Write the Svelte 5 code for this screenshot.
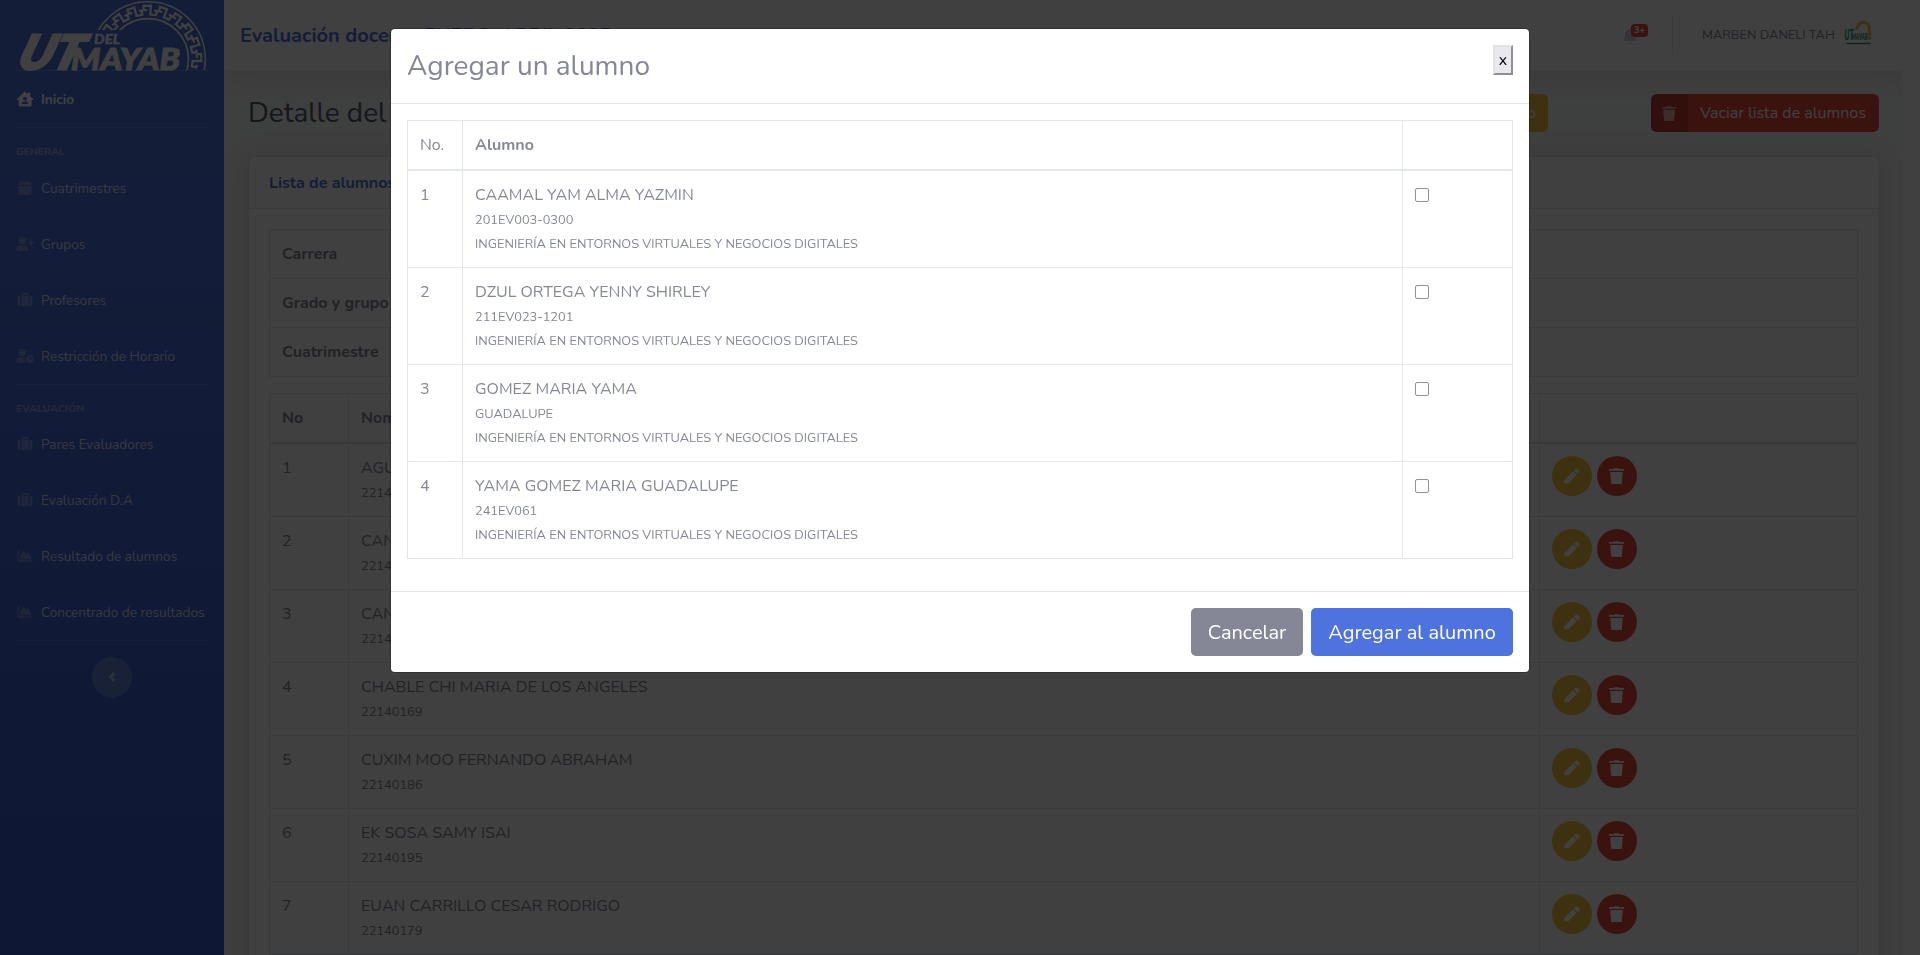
<script>
  const general = [
    { icon: 'calendar', label: 'Cuatrimestres' },
    { icon: 'userPlus', label: 'Grupos' },
    { icon: 'suitcase', label: 'Profesores' },
    { icon: 'userClock', label: 'Restricción de Horario' }
  ];
  const evaluation = [
    { icon: 'suitcase', label: 'Pares Evaluadores' },
    { icon: 'suitcase', label: 'Evaluación D.A' },
    { icon: 'chart', label: 'Resultado de alumnos' },
    { icon: 'chart', label: 'Concentrado de resultados' }
  ];
  const groupInfo = ['Carrera', 'Grado y grupo', 'Cuatrimestre'];
  const roster = [
    ['AGU', '22140'],
    ['CAN', '22140'],
    ['CAN', '22140'],
    ['CHABLE CHI MARIA DE LOS ANGELES', '22140169'],
    ['CUXIM MOO FERNANDO ABRAHAM', '22140186'],
    ['EK SOSA SAMY ISAI', '22140195'],
    ['EUAN CARRILLO CESAR RODRIGO', '22140179']
  ];
  const program = 'INGENIERÍA EN ENTORNOS VIRTUALES Y NEGOCIOS DIGITALES';
  const candidates = [
    ['CAAMAL YAM ALMA YAZMIN', '201EV003-0300'],
    ['DZUL ORTEGA YENNY SHIRLEY', '211EV023-1201'],
    ['GOMEZ MARIA YAMA', 'GUADALUPE'],
    ['YAMA GOMEZ MARIA GUADALUPE', '241EV061']
  ];

  // Fret band of the emblem, one S-shaped hook per step around the arc
  const hook = [[0.3, 0.5], [0.08, 0.5], [0.08, 1], [0.52, 1], [0.52, 0], [0.94, 0], [0.94, 0.5], [0.76, 0.5]];
  const steps = 9;
  let fret = '';
  for (let i = 0; i < steps; i++) {
    hook.forEach(([u, v], k) => {
      const a = ((150 - ((i + u) * 161) / steps) * Math.PI) / 180;
      const r = 44.6 + v * 8.8;
      fret += `${k ? 'L' : 'M'}${(132 + r * Math.cos(a)).toFixed(1)} ${(59 - r * Math.sin(a)).toFixed(1)}`;
    });
  }
</script>

{#snippet icon(name)}
  {#if name === 'home'}
    <svg class="ico" viewBox="0 0 18 16"><path fill-rule="evenodd" d="M9 .6 11.7 3V2.1q0-.6.6-.6h1.4q.6 0 .6.6v3.2l2.9 2.6q.6.9-.6 1.1h-1v5.3q0 1.1-1.1 1.1H3.700q-1.100 0-1.100-1.100V9h-1q-1.200-.2-.6-1.100L8.300.9Q8.700.5 9 .6ZM9 5.800a1.900 1.900 0 1 0 0 3.800 1.900 1.900 0 0 0 0-3.800ZM7.600 10.400Q5.900 10.600 5.700 12.600q0 .5.5.5h5.600q.5 0 .5-.5-.2-2-1.900-2.200Z"/></svg>
  {:else if name === 'calendar'}
    <svg class="ico" viewBox="0 0 18 16"><path d="M4 2h1.400V.9q0-.6.8-.6t.8.6V2h4V.9q0-.6.8-.6t.8.6V2H14q1.500 0 1.500 1.500V5h-13V3.500Q2.500 2 4 2ZM2.500 6h13v7.500Q15.500 15 14 15H4q-1.500 0-1.500-1.500Z"/></svg>
  {:else if name === 'userPlus'}
    <svg class="ico" viewBox="0 0 18 16"><circle cx="6.300" cy="4.500" r="3.700"/><path d="M4.800 9.400h3Q12 9.600 12.300 14q0 1-1 1h-10q-1 0-1-1 .3-4.400 4.500-4.600ZM14.200 4h1.500v2h2.100v1.500h-2.100v2.100h-1.500V7.500H12V6h2.200Z"/></svg>
  {:else if name === 'userClock'}
    <svg class="ico" viewBox="0 0 18 16"><circle cx="6.300" cy="4.500" r="3.700"/><path fill-rule="evenodd" d="M4.800 9.400h3l1.400.2q-1 3 .8 5.400H1.300q-1 0-1-1 .3-4.400 4.500-4.600ZM13.900 6.900a4 4 0 1 0 0 8 4 4 0 0 0 0-8Zm-.5 1.800h.9v1.900h1.600v.9h-2.500Z"/></svg>
  {:else if name === 'suitcase'}
    <svg class="ico" viewBox="0 0 18 16"><path fill-rule="evenodd" d="M5.300 14.200V2.500Q5.300 1 6.800 1h4.400q1.500 0 1.500 1.500v11.700ZM6.800 3.800h4.400V2.500H6.800ZM3 4h1.300v10.200H3Q1.500 14.200 1.500 12.700V5.500Q1.500 4 3 4ZM13.700 4H15q1.500 0 1.500 1.500v7.200q0 1.500-1.500 1.500h-1.300Z"/></svg>
  {:else if name === 'chart'}
    <svg class="ico" viewBox="0 0 18 16"><path d="M1.500 2.500H3v9.700h13.500v1.500H2.500q-1 0-1-1ZM4 11.200V7.500l3-4.100q.4-.4.800 0l2 2.300 2-1.300q.5-.2.800.2l3.400 6.600Z"/></svg>
  {:else if name === 'trash'}
    <svg class="ico" viewBox="0 0 16 16"><path d="M5.200.2h4.600l.5.900h4.700v1.600H0V1.100h4.700ZM1.200 4h12.600l-.9 11q-.1 1-1.100 1H3.200q-1 0-1.100-1Z"/></svg>
  {:else if name === 'pencil'}
    <svg class="ico" viewBox="0 0 16 16"><path d="M11.400.9q1.200-1 2.400 0l1.400 1.400q1 1.200 0 2.400L13.600 6.300 9.800 2.500ZM9 3.300l3.800 3.800-7.300 7.200q-.5.400-1 .9H.2L0 15 .4 12Z"/></svg>
  {/if}
{/snippet}

<div class="page">
  <nav class="sidebar">
    <div class="brand">
      <svg width="192" height="70" viewBox="0 0 192 70">
        <defs><clipPath id="ring"><path d="M0 0H192V70H169V60L130 30H0Z"/></clipPath></defs>
        <g clip-path="url(#ring)" fill="none" stroke="#fff">
          <circle cx="132" cy="59" r="57.300" stroke-width="1.500"/>
          <circle cx="132" cy="59" r="40.400" stroke-width="1.600"/>
          <path d={fret} stroke-width="2.200"/>
        </g>
        <g fill="#fff" stroke="#fff" class="mark">
          <text transform="translate(0 69) skewX(-18)" font-size="47" stroke-width="3" textLength="62" lengthAdjust="spacingAndGlyphs">UT</text>
          <text x="78" y="43.500" font-size="13.500" stroke-width=".3" textLength="26" lengthAdjust="spacingAndGlyphs">DEL</text>
          <text x="55" y="69.500" font-size="30" stroke-width="1" textLength="109" lengthAdjust="spacingAndGlyphs">MAYAB</text>
        </g>
      </svg>
    </div>
    <hr class="flush" />
    <a class="item active" href="#inicio">{@render icon('home')}<span>Inicio</span></a>
    <hr />
    <div class="heading">General</div>
    {#each general as g}
      <a class="item" href="#general">{@render icon(g.icon)}<span>{g.label}</span></a>
    {/each}
    <hr />
    <div class="heading">Evaluación</div>
    {#each evaluation as g}
      <a class="item" href="#evaluacion">{@render icon(g.icon)}<span>{g.label}</span></a>
    {/each}
    <hr />
    <button class="toggle" aria-label="Contraer"><svg width="8" height="10" viewBox="0 0 8 10"><path d="M6.300 1 2.300 5l4 4" fill="none" stroke="currentColor" stroke-width="2.800"/></svg></button>
  </nav>

  <div class="content">
    <header class="topbar">
      <div class="period"><span>Evaluación docente</span><span class="term">ENERO-ABRIL 2025</span></div>
      <div class="bell">
        <svg width="14" height="16" viewBox="0 0 14 16"><path d="M7 0q1 0 1 1v.7q3.800.8 4 5 0 3 1.700 4.600.6 1.400-.8 1.700H1.100q-1.400-.3-.8-1.700Q2 9.700 2 6.700q.2-4.200 4-5V1q0-1 1-1ZM5 14h4q-.3 2-2 2t-2-2Z" fill="#d1d3e2"/></svg>
        <span class="badge">3+</span>
      </div>
      <div class="rule"></div>
      <span class="user">MARBEN DANELI TAH</span>
      <svg class="avatar" width="32" height="32" viewBox="0 0 32 32">
        <path d="M15 10.500a5.700 6.500 0 0 1 12.500 0V21" fill="none" stroke="#f5c469" stroke-width="3.500"/>
        <g fill="#12a07c" class="mark">
          <text x="2.500" y="21" font-size="15" textLength="9" lengthAdjust="spacingAndGlyphs">UT</text>
          <text x="9.500" y="21" font-size="10" textLength="16" lengthAdjust="spacingAndGlyphs">MAYAB</text>
          <rect x="4.500" y="23.800" width="24" height="1.400"/>
        </g>
      </svg>
    </header>

    <main>
      <div class="title-row">
        <h1>Detalle del grupo</h1>
        <button class="btn warn">Agregar alumno</button>
        <button class="btn danger"><span class="btn-icon">{@render icon('trash')}</span><span class="btn-text">Vaciar lista de alumnos</span></button>
      </div>
      <section class="card">
        <h6>Lista de alumnos</h6>
        <div class="card-body">
          <table class="info">
            <tbody>
              {#each groupInfo as label}<tr><th>{label}</th></tr>{/each}
            </tbody>
          </table>
          <table class="roster">
            <colgroup><col class="num" /><col /><col class="act" /></colgroup>
            <thead><tr><th>No</th><th>Nombre</th><th></th></tr></thead>
            <tbody>
              {#each roster as [name, id], i}
                <tr>
                  <td>{i + 1}</td>
                  <td><div>{name}</div><div class="small">{id}</div></td>
                  <td>
                    <div class="actions">
                      <button class="circle yellow" aria-label="Editar">{@render icon('pencil')}</button>
                      <button class="circle red" aria-label="Eliminar">{@render icon('trash')}</button>
                    </div>
                  </td>
                </tr>
              {/each}
            </tbody>
          </table>
        </div>
      </section>
    </main>
  </div>
</div>

<div class="backdrop">
  <div class="modal" role="dialog">
    <div class="modal-head">
      <h5>Agregar un alumno</h5>
      <button class="close">x</button>
    </div>
    <div class="modal-body">
      <table>
        <colgroup><col class="mnum" /><col /><col class="mchk" /></colgroup>
        <thead><tr><td>No.</td><th>Alumno</th><th></th></tr></thead>
        <tbody>
          {#each candidates as [name, id], i}
            <tr>
              <td>{i + 1}</td>
              <td><div>{name}</div><div class="small">{id}</div><div class="small">{program}</div></td>
              <td><input type="checkbox" /></td>
            </tr>
          {/each}
        </tbody>
      </table>
    </div>
    <div class="modal-foot">
      <button class="lg grey">Cancelar</button>
      <button class="lg blue">Agregar al alumno</button>
    </div>
  </div>
</div>

<style>
  :global(body) { margin: 0; overflow: hidden; background: #fff; }
  * { box-sizing: border-box; }
  .page, .backdrop { font-family: Nunito, Lato, sans-serif; font-size: 16px; line-height: 24px; color: #858796; }
  .page { display: flex; height: 955px; overflow: hidden; padding-right: 17px; }
  button { font-family: inherit; border: 0; padding: 0; margin: 0; }
  svg { display: block; overflow: visible; }
  .ico { fill: currentColor; flex: none; }

  .sidebar { width: 224px; flex: none; background: linear-gradient(180deg, #4e73df 170px, #224abe 1700px); }
  .brand { height: 70px; padding-left: 16px; }
  .mark { font-family: Lato, sans-serif; font-weight: 900; font-style: italic; }
  hr { border: 0; border-top: 1px solid rgba(255, 255, 255, .15); margin: 0 16px 16px; }
  hr.flush { margin-bottom: 0; }
  .item { display: flex; align-items: center; gap: 7px; height: 56px; padding: 0 16px; font-size: 13.6px; color: rgba(255, 255, 255, .8); text-decoration: none; white-space: nowrap; }
  .item .ico { width: 18px; height: 16px; color: rgba(255, 255, 255, .3); }
  .item span { padding-top: 2px; }
  .item.active { color: #fff; font-weight: 700; }
  .item.active .ico { color: #fff; }
  .heading { height: 15.6px; line-height: 15.6px; padding: 0 16px; font-size: 10.4px; font-weight: 800; text-transform: uppercase; color: rgba(255, 255, 255, .4); }
  .toggle { display: flex; align-items: center; justify-content: center; width: 40px; height: 40px; margin: 0 auto; border-radius: 50%; background: rgba(255, 255, 255, .2); color: rgba(255, 255, 255, .5); }

  .content { flex: 1; min-width: 0; overflow: hidden; background: #f8f9fc; }
  .topbar { position: relative; display: flex; align-items: center; height: 70px; padding: 0 29px 0 16px; background: #fff; box-shadow: 0 2.4px 28px rgba(58, 59, 69, .15); }
  .period { display: flex; flex: 1; padding-top: 2px; font-size: 20px; font-weight: 700; color: #4e73df; white-space: nowrap; }
  .period span:first-child { width: 184px; }
  .term { letter-spacing: -.1px; }
  .bell { position: relative; width: 49px; padding-top: 2px; }
  .badge { position: absolute; left: 8px; top: -2px; width: 17px; height: 13px; border-radius: 4px; background: #e74a3b; color: #fff; font-size: 9px; font-weight: 700; line-height: 13px; text-align: center; }
  .rule { width: 1px; height: 38px; margin-right: 29px; background: #e3e6f0; }
  .user { width: 140px; font-size: 12.8px; white-space: nowrap; }

  main { padding: 24px 24px 0; }
  .title-row { display: flex; align-items: center; height: 38px; margin-bottom: 24px; }
  h1 { flex: 1; margin: 0; padding-top: 2px; font-size: 28px; font-weight: 400; line-height: 33.6px; color: #5a5c69; }
  .btn { display: flex; align-items: stretch; height: 38px; border-radius: 5.6px; color: #fff; font-size: 16px; line-height: 38px; overflow: hidden; white-space: nowrap; }
  .warn { background: #f6c23e; padding: 0 12px; margin-right: 103px; }
  .danger { width: 228px; background: #e74a3b; }
  .btn-icon { display: flex; align-items: center; justify-content: center; width: 37px; background: rgba(0, 0, 0, .15); color: rgba(255, 255, 255, .6); }
  .btn-icon .ico { width: 15px; height: 15px; }
  .btn-text { padding-left: 12px; }

  .card { border: 1px solid #e3e6f0; border-radius: 5.6px; background: #fff; box-shadow: 0 2.4px 28px rgba(58, 59, 69, .15); }
  h6 { margin: 0; padding: 17px 20px 15px; border-bottom: 1px solid #e3e6f0; font-size: 16px; line-height: 19.2px; font-weight: 700; color: #4e73df; }
  .card-body { padding: 20px; }
  table { width: 100%; table-layout: fixed; border-collapse: collapse; border: 1px solid #e3e6f0; margin-bottom: 16px; }
  th, td { padding: 12px; border: 1px solid #e3e6f0; text-align: left; vertical-align: top; white-space: nowrap; }
  th { font-weight: 700; }
  thead th, thead td { border-bottom-width: 2px; height: 48px; }
  .roster thead th { height: 49px; }
  .num { width: 79px; }
  .act { width: 318px; }
  .small { height: 24px; padding-top: 1px; font-size: 12.8px; }
  .roster td { height: 73px; padding-bottom: 0; }
  .actions { display: flex; gap: 5px; }
  .circle { display: flex; align-items: center; justify-content: center; width: 40px; height: 40px; border-radius: 50%; color: #fff; }
  .circle .ico { width: 16px; height: 16px; }
  .yellow { background: #f6c23e; }
  .red { background: #e74a3b; }

  .backdrop { position: fixed; inset: 0; background: rgba(0, 0, 0, .75); padding-top: 28px; }
  .modal { width: 1140px; margin: 0 auto; border: 1px solid rgba(0, 0, 0, .2); border-radius: 4.8px; background: #fff; background-clip: padding-box; }
  .modal-head { display: flex; justify-content: space-between; align-items: flex-start; padding: 16px; border-bottom: 1px solid #e3e6f0; }
  h5 { margin: 0; font-size: 28px; font-weight: 400; line-height: 42px; }
  .close { width: 20px; height: 30px; border: 2px outset #e3e3e3; background: #e9e9ed; color: #000; font-size: 16px; line-height: 24px; text-align: center; }
  .modal-body { padding: 16px; }
  .mnum { width: 55px; }
  .mchk { width: 110px; }
  input { appearance: none; display: block; width: 14px; height: 14px; margin: 5px 0 0; border: 1px solid #8f8f9d; border-radius: 2px; background: #fff; }
  .modal-foot { display: flex; justify-content: flex-end; gap: 8px; padding: 16px; border-top: 1px solid #e3e6f0; }
  .lg { height: 48px; padding-top: 2px; border-radius: 4.8px; color: #fff; font-size: 20px; line-height: 30px; white-space: nowrap; }
  .grey { width: 112px; background: #858796; }
  .blue { width: 202px; background: #4e73df; }
</style>
